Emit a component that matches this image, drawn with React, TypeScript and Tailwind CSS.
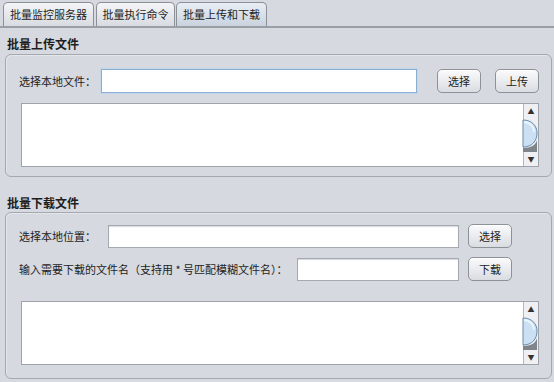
import React from 'react';

const font = { fontFamily: '"Noto Sans CJK SC", "Liberation Sans", sans-serif' };

const Tab: React.FC<{ label: string; width: string; active?: boolean }> = ({ label, width, active }) => (
    <div
        className={`${width} h-[24px] flex items-center justify-center whitespace-nowrap rounded-t-[5px] border border-b-0 border-[#8b9097] text-[11px] text-[#1e1e1e] ${
            active ? 'bg-gradient-to-b from-[#e9eef4] to-[#c9d3de]' : 'bg-gradient-to-b from-[#f4f5f7] to-[#d8dbe0]'
        }`}
    >
        {label}
    </div>
);

const Button: React.FC<{ label: string; className?: string }> = ({ label, className = '' }) => (
    <button
        className={`shrink-0 h-[24px] w-[44px] rounded-[5px] border border-[#8d9299] bg-gradient-to-b from-[#fbfbfc] to-[#d9dce1] text-[11px] text-[#1e1e1e] shadow-[inset_0_1px_0_#ffffff] ${className}`}
    >
        {label}
    </button>
);

const TextArea: React.FC = () => (
    <div className="ml-[15px] w-[518px] h-[64px] flex border border-[#9ea2a9] bg-white">
        <div className="flex-1" />
        <div className="w-[15px] h-full flex flex-col items-center border-l border-[#b4b8be] bg-[#eef0f3]">
            <span className="text-[7px] leading-[12px] text-[#333] mt-[1px]">▲</span>
            <div className="flex-1 w-full relative">
                <svg className="absolute -left-[5px] top-[1px]" width="20" height="36" viewBox="0 0 20 36">
                    <path d="M4 30 C12 30 17 27 18 22 L18 34 L4 34 Z" fill="#80858b" />
                    <path d="M4 2 C13 2 18 8 18 15 C18 23 13 29 4 29 Z" fill="#cbe0f2" stroke="#6a8bad" strokeWidth="1" />
                    <path d="M5 4 C11 4 15 9 15 14" fill="none" stroke="#eef6fd" strokeWidth="2" />
                </svg>
            </div>
            <span className="text-[7px] leading-[12px] text-[#333] mb-[1px]">▼</span>
        </div>
    </div>
);

const Input: React.FC<{ className: string; focused?: boolean }> = ({ className, focused }) => (
    <div
        className={`${className} shrink-0 bg-white border ${
            focused ? 'border-[#8aaed4] shadow-[0_0_0_1px_#c3d6ea]' : 'border-[#a5a9b0] shadow-[inset_0_1px_1px_#d6d9de]'
        }`}
    />
);

export default function App() {
    return (
        <div className="w-[554px] h-[382px] bg-[#d6d9df] overflow-hidden text-[#1e1e1e]" style={font}>
            {/* tab strip */}
            <div className="flex items-end pl-[3px] pt-[3px] border-b-2 border-[#9a9fa6] h-[28px]">
                <Tab label="批量监控服务器" width="w-[91px]" />
                <div className="w-[2px]" />
                <Tab label="批量执行命令" width="w-[79px]" />
                <div className="w-[1px]" />
                <Tab label="批量上传和下载" width="w-[91px]" active />
            </div>

            <div className="pl-[7px] pt-[9px] text-[12px] leading-[14px] font-bold">批量上传文件</div>
            <div className="ml-[5px] mt-[3px] w-[547px] h-[123px] rounded-[6px] border border-[#a4a8af] shadow-[inset_1px_1px_0_#e4e6ea]">
                <div className="flex items-center mt-[14px] h-[24px]">
                    <span className="ml-[13px] w-[82px] shrink-0 whitespace-nowrap text-[11px]">选择本地文件：</span>
                    <Input className="w-[316px] h-[24px]" focused />
                    <Button label="选择" className="ml-[20px]" />
                    <Button label="上传" className="ml-[14px]" />
                </div>
                <div className="mt-[10px]">
                    <TextArea />
                </div>
            </div>

            <div className="pl-[7px] pt-[19px] text-[12px] leading-[14px] font-bold">批量下载文件</div>
            <div className="ml-[5px] mt-[2px] w-[547px] h-[167px] rounded-[6px] border border-[#a4a8af] shadow-[inset_1px_1px_0_#e4e6ea]">
                <div className="flex items-center mt-[11px] h-[24px]">
                    <span className="ml-[13px] w-[89px] shrink-0 whitespace-nowrap text-[11px]">选择本地位置：</span>
                    <Input className="w-[351px] h-[23px]" />
                    <Button label="选择" className="ml-[9px]" />
                </div>
                <div className="flex items-center mt-[9px] h-[24px]">
                    <span className="ml-[13px] w-[278px] shrink-0 whitespace-nowrap text-[11px]">输入需要下载的文件名（支持用 * 号匹配模糊文件名）：</span>
                    <Input className="w-[162px] h-[23px]" />
                    <Button label="下载" className="ml-[9px]" />
                </div>
                <div className="mt-[20px]">
                    <TextArea />
                </div>
            </div>
        </div>
    );
}
